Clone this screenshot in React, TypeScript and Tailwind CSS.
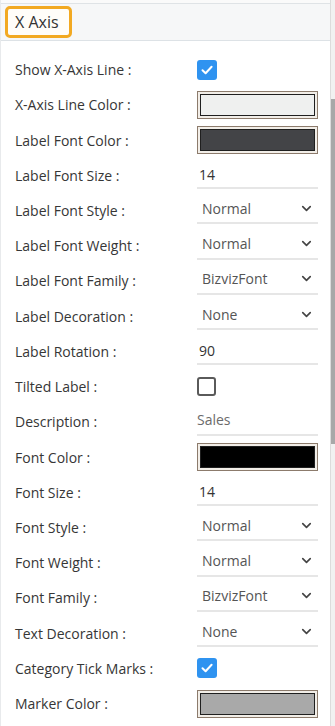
import { ChevronDown } from "lucide-react"

type Row =
  | { label: string; kind: "check"; checked: boolean }
  | { label: string; kind: "color"; color: string }
  | { label: string; kind: "text"; value: string; muted?: boolean }
  | { label: string; kind: "select"; value: string }

const rows: Row[] = [
  { label: "Show X-Axis Line :", kind: "check", checked: true },
  { label: "X-Axis Line Color :", kind: "color", color: "#eff0ef" },
  { label: "Label Font Color :", kind: "color", color: "#434447" },
  { label: "Label Font Size :", kind: "text", value: "14" },
  { label: "Label Font Style :", kind: "select", value: "Normal" },
  { label: "Label Font Weight :", kind: "select", value: "Normal" },
  { label: "Label Font Family :", kind: "select", value: "BizvizFont" },
  { label: "Label Decoration :", kind: "select", value: "None" },
  { label: "Label Rotation :", kind: "text", value: "90" },
  { label: "Tilted Label :", kind: "check", checked: false },
  { label: "Description :", kind: "text", value: "Sales", muted: true },
  { label: "Font Color :", kind: "color", color: "#000000" },
  { label: "Font Size :", kind: "text", value: "14" },
  { label: "Font Style :", kind: "select", value: "Normal" },
  { label: "Font Weight :", kind: "select", value: "Normal" },
  { label: "Font Family :", kind: "select", value: "BizvizFont" },
  { label: "Text Decoration :", kind: "select", value: "None" },
  { label: "Category Tick Marks :", kind: "check", checked: true },
  { label: "Marker Color :", kind: "color", color: "#a9a9a9" },
]

function Checkbox({ checked }: { checked: boolean }) {
  if (!checked) {
    return <div className="h-[19px] w-[19px] rounded-[3px] border-2 border-[#5a5a5a] bg-white" />
  }
  return (
    <div className="flex h-[20px] w-[20px] items-center justify-center rounded-[3px] bg-[#2f93f0]">
      <svg width="14" height="14" viewBox="0 0 14 14" fill="none">
        <path d="M2.5 7.2 L5.6 10.2 L11.6 3.8" stroke="white" strokeWidth="2" strokeLinecap="round" strokeLinejoin="round" />
      </svg>
    </div>
  )
}

function Value({ row }: { row: Row }) {
  switch (row.kind) {
    case "check":
      return <Checkbox checked={row.checked} />
    case "color":
      return (
        <div className="h-[28px] w-[121px] border border-[#8c7b6c] bg-[#f2eee8] p-[2px]">
          <div className="h-full w-full border border-[#1f1f1f]" style={{ backgroundColor: row.color }} />
        </div>
      )
    case "text":
      return (
        <div
          className={
            row.muted
              ? "flex h-[28px] w-[121px] items-center border-b-2 border-[#e6e6e6] pb-[3px] text-[14px] text-[#6b6b6b]"
              : "flex h-[28px] w-[121px] items-center border-b-2 border-[#e6e6e6] pl-[2px] text-[14px] text-[#333]"
          }
        >
          {row.value}
        </div>
      )
    case "select":
      return (
        <div className="flex h-[28px] w-[121px] items-center justify-between border-b-2 border-[#e6e6e6] pb-[2px] pl-[5px] pr-[4px] text-[14px] text-[#555]">
          <span>{row.value}</span>
          <ChevronDown size={15} strokeWidth={2.6} className="text-[#444]" />
        </div>
      )
  }
}

export default function App() {
  return (
    <div className="flex h-[726px] w-[335px] overflow-hidden bg-white" style={{ fontFamily: "'Open Sans', sans-serif" }}>
      <div className="flex flex-1 flex-col border-l border-[#e8eaec]">
        <div className="h-[4px] border-b border-[#dfe3e6] bg-[#fafafa]" />
        <div className="flex h-[37px] items-center border-b border-[#dde2e6] bg-[#f6f7f8] pl-[4px]">
          <div className="flex h-[32px] w-[67px] items-center rounded-[5px] border-[3px] border-[#f2a922] bg-[#fffdf9] pl-[7px] text-[16px] text-[#333]">
            X Axis
          </div>
        </div>
        <div className="flex flex-col pt-[11px]">
          {rows.map((row) => (
            <div key={row.label} className="flex h-[35.22px] items-center text-[14px]">
              <div className="w-[196px] pl-[14px] text-[#363636]">{row.label}</div>
              <Value row={row} />
            </div>
          ))}
        </div>
      </div>
      <div className="flex w-[5px] flex-col border-l border-[#dcdcdc] bg-[#f1f1f1]">
        <div className="mt-[99px] h-[345px] bg-[#a8a8a8]" />
      </div>
    </div>
  )
}
